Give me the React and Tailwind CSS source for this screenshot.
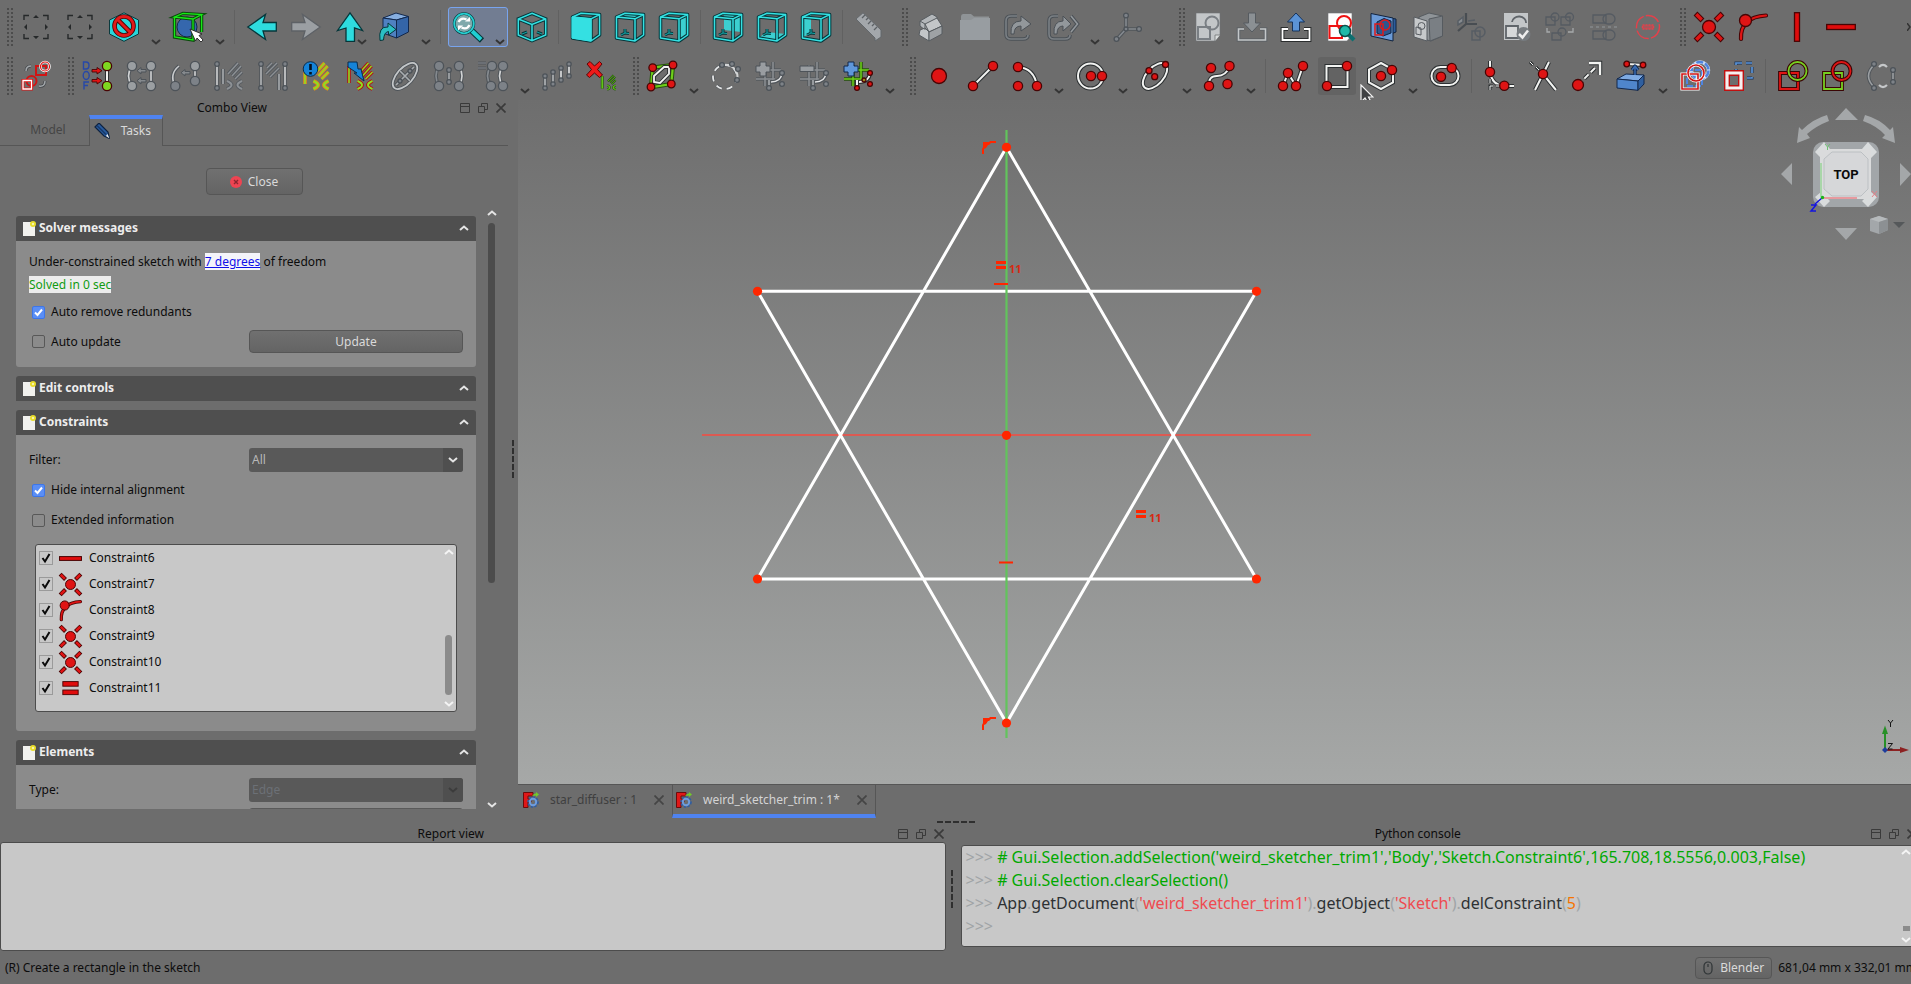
import React from "react";

/* ---------- drawing helpers ---------- */

const RED = "#df1414";
const CYAN = "#34e0e2";
const EDGE = "#06363a";

const Dot = ({ x, y, r = 4.6, g, c }) => (
  <circle cx={x} cy={y} r={r} fill={c || (g ? "#7d8288" : RED)} stroke={g ? "#4d5359" : "#480404"} strokeWidth="1.3" />
);

const Line = ({ d, c = "#f2f3f1", o = "#2c3032", w = 2, dash }) => (
  <g fill="none" strokeDasharray={dash}>
    <path d={d} stroke={o} strokeWidth={w + 2} />
    <path d={d} stroke={c} strokeWidth={w} />
  </g>
);

const GLine = ({ d, w = 1.6, c = "#a9adb0" }) => <Line d={d} c={c} o="#50555a" w={w} />;

const Page = ({ c = "#f4f4f4" }) => <path d="M3 1h24v22l-5 6H3z" fill={c} stroke="#6f7375" strokeWidth=".6" />;

const Bars = ({ c, o }) => (
  <g>
    <Line d="M14 13 24 2M18 15 27 5M21 18 28 11" c={c} o={o} w={1.4} />
    <Line d="M13 20q9 4 0 8M28 20q-9 4 0 8" c={c} o={o} w={2} />
  </g>
);

const Wire = ({ d }) => <Line d={d} c={CYAN} o={EDGE} w={1.5} />;

const Cube = ({ face, front }) => (
  <g strokeLinejoin="round">
    {!front && <path d={face} fill={CYAN} fillOpacity=".85" />}
    <Line d="M10 21V17M10 21l4 .5M10 21l-4 2" c="#16a9ab" o={EDGE} w={1} />
    <Wire d="M1.5 5 10 1.3 28.6 2.6 20 6.8zM20 6.8V29L1.5 26V5M28.6 2.6V23L20 29" />
    {front && <path d={face} fill={CYAN} stroke={CYAN} />}
  </g>
);

const Grid = ({ c, o }) => <Line d="M10 4V25M18 1V21M2 9H26M1 18H20" c={c} o={o} w={1.5} />;

const Sk = ({ a = RED, b = RED, o = "#3a0505", w = 1.8 }) => (
  <g>
    <Line d="M2 12H20V28H2z" c={a} o={o} w={w} />
    <Line d="M28.5 10a9 9 0 1 1-18 0a9 9 0 1 1 18 0z" c={b} o={o} w={w} />
  </g>
);

const ICONS = {
  box: (
    <g fill="none" stroke="#26292a" strokeWidth="1.4">
      <path d="M3 8V3.500H8M22 3.500H27V8M27 22V26.500H22M8 26.500H3V22" />
      <path d="M12 6h6l-3-3zM12 24h6l-3 3zM6 12v6l-3-3zM24 12v6l3-3z" fill="#26292a" stroke="none" />
    </g>
  ),
  nodraw: (
    <g>
      <path d="M15 .8 29.500 8V22L15 29.300.500 22V8z" fill="#29d6da" stroke="#0b3a3e" />
      <circle cx="15" cy="14" r="9.500" fill="none" stroke="#4a0404" strokeWidth="4.600" />
      <path d="M8.500 7.500 21.500 20.500" stroke="#4a0404" strokeWidth="4.600" />
      <circle cx="15" cy="14" r="9.500" fill="none" stroke="#e01a1a" strokeWidth="2.800" />
      <path d="M8.500 7.500 21.500 20.500" stroke="#e01a1a" strokeWidth="2.800" />
    </g>
  ),
  bbox: (
    <g>
      <circle cx="14" cy="15" r="10" fill="#3567ad" stroke="#12284d" />
      <Line d="M1.500 5 10 1.300 28.600 2.600 20 7zM20 7V28L1.500 25V5M28.600 2.600V20" c="#17e817" o="#0a4a0a" w={1.3} />
      <path d="M17 17 29 22 26 23.500 30 28 28 30 24 26 22.500 29z" fill="#fff" stroke="#222" strokeWidth=".9" />
    </g>
  ),
  left: <path d="M.8 15 18.500 2.500 16 10.500H29.300V19H16L18.500 27.500z" fill="#2edcdf" stroke={EDGE} strokeWidth="1.300" />,
  right: <path d="M29.200 15 11.500 2.500 14 10.500H.7V19H14L11.500 27.500z" fill="#9b9fa3" stroke="#5d6166" strokeWidth="1.300" />,
  up: <path d="M15 .8 27.500 18.500 19.500 16V29.300H11V16L2.500 18.500z" fill="#2edcdf" stroke={EDGE} strokeWidth="1.300" />,
  link: (
    <g strokeLinejoin="round" stroke="#12284d">
      <path d="M4 6 17 1 29.500 4.500 17.500 8z" fill="#86aee0" />
      <path d="M4 6 17.500 8V26L4 21z" fill="#4f81c2" />
      <path d="M17.500 8 29.500 4.500V20L17.500 26z" fill="#3465a8" />
      <path d="M1 28.500Q-1 14 9 15V11L17 17.500 9.500 23V19.500Q5 20 4.500 28z" fill="#2bbfc4" stroke={EDGE} />
    </g>
  ),
  zoom: (
    <g>
      <path d="M18 18 29 28.500" stroke={EDGE} strokeWidth="6" />
      <path d="M18 18 28 27.500" stroke="#20cfd2" strokeWidth="4" />
      <circle cx="11" cy="11.500" r="9.800" fill="#7fa9ac" stroke={EDGE} strokeWidth="2.800" />
      <circle cx="11" cy="11.500" r="9.800" fill="none" stroke="#26cdd0" strokeWidth="1.800" />
      <path d="M5.500 10Q8 5 13.500 7.500M16.500 13Q14 18 8.500 15.500" fill="none" stroke="#fff" strokeWidth="2.200" />
      <path d="M12 9.500h5V5zM10 13.500H5v5z" fill="#fff" />
    </g>
  ),
  iso: (
    <g>
      <Line d="M5 22 10 20M25 22 20 20" c="#16a9ab" o={EDGE} w={1} />
      <Wire d="M15 1.300 28.700 7V23L15 28.700 1.300 23V7zM1.300 7 15 12.500 28.700 7M15 12.500V28.700" />
    </g>
  ),
  front: <Cube front face="M1 5 20 6.800V29L1 26z" />,
  top: <Cube face="M1.500 5 10 1.300 28.600 2.600 20 6.800z" />,
  rightv: <Cube face="M20 6.800 28.600 2.600V23L20 29z" />,
  rear: <Cube face="M11 2H28V20L11 18z" />,
  bottom: <Cube face="M1.500 26 10 20 28.600 22 20 29z" />,
  leftv: <Cube face="M1.500 5 10 2V20L1.500 26z" />,
  ruler: (
    <g>
      <path d="M1 7 8 .8 26 18V25L20 29V26z" fill="#a3a7ab" stroke="#63686c" />
      <path d="M10 3 7 6M13 6 11 8M16 9 13 12M19 12 17 14M22 15 19 18" stroke="#5c6165" strokeWidth="1.300" />
    </g>
  ),
  part: (
    <g stroke="#575c60" strokeLinejoin="round" fill="#b3b7ba">
      <path d="M4 9 16 2 21 5V12L9 18 4 14z" />
      <path d="M9 12 21 6 26 14 13 20zM4 18 9 16 13 20V29L3 23z" fill="#c3c6c8" />
      <path d="M13 20 26 14V22L13 29z" fill="#9ea2a5" />
      <path d="M4 9 9 12V18" fill="none" />
    </g>
  ),
  folder: (
    <g>
      <path d="M1 4.500Q1 2 3 2H11L14 4.500H29V10H1z" fill="#8f9396" />
      <path d="M0 8H11L14 6H30V28H0z" fill="#989da1" />
    </g>
  ),
  share: (
    <g>
      <Line d="M13 4H7Q2 4 2 9V22Q2 27 7 27H19Q24 27 24 23" c="#7b8085" o="#4b5157" w={1.6} />
      <path d="M7 22Q6 9 17 9V4L27 12 17 19V14Q10 14 10 22z" fill="#92979b" stroke="#4b5157" />
    </g>
  ),
  share2: (
    <g>
      <Line d="M10 4H6Q1 4 1 9V22Q1 27 6 27H17Q22 27 22 23" c="#7b8085" o="#4b5157" w={1.6} />
      <path d="M6 22Q5 9 15 9V4L23 12 15 19V14Q9 14 9 22z" fill="#92979b" stroke="#4b5157" />
      <Line d="M23 4 29.500 12 23 20" c="#92979b" o="#4b5157" w={1.6} />
    </g>
  ),
  axes: (
    <g>
      <GLine d="M14 3V17H27M14 17 5 27" c="#858a8f" />
      <Dot g x={14} y={3.5} r={2.4} /><Dot g x={27} y={17} r={2.4} /><Dot g x={4.500} y={27} r={2.4} /><Dot g x={14} y={17} r={2} />
    </g>
  ),
  sketch: (
    <g>
      <Page c="#c3c6c8" />
      <path d="M22 29V23H27" fill="#dcdede" stroke="#6f7375" strokeWidth=".8" />
      <path d="M5 15H17V27H5z" fill="none" stroke="#7a7f84" strokeWidth="2" />
      <circle cx="19" cy="11" r="6.500" fill="none" stroke="#7a7f84" strokeWidth="2" />
    </g>
  ),
  imp: (
    <g>
      <Line d="M7 17H1.500V28H28.500V17H23" c="#c4c7c9" o="#5d6266" w={1.6} />
      <path d="M11.500 1H18.500V11H23.500L15 20 6.500 11H11.500z" fill="#8b9094" stroke="#565b60" />
    </g>
  ),
  exp: (
    <g>
      <Line d="M7 17H1.500V28H28.500V17H23" c="#fff" o="#2b2d2e" w={1.8} />
      <path d="M11.500 19V10H6.500L15 1 23.500 10H18.500V19z" fill="#5b93d6" stroke="#173259" />
    </g>
  ),
  viewsk: (
    <g>
      <Page c="#fdfdfd" />
      <path d="M4.500 14H17V26H4.500z" fill="none" stroke="#ee1111" strokeWidth="2" />
      <circle cx="19" cy="11" r="7" fill="none" stroke="#ee1111" strokeWidth="2" />
      <path d="M23 22 29 28" stroke="#0d6f70" strokeWidth="4" />
      <circle cx="20" cy="19" r="5.500" fill="#1fb9a8" stroke="#0b4e4b" strokeWidth="1.500" />
    </g>
  ),
  section: (
    <g>
      <path d="M14 5 27 7V20L17 24z" fill="#2d5c9c" stroke="#10233f" />
      <path d="M2 1.500 24 6V29L2 24z" fill="#6b9ad6" stroke="#10233f" />
      <path d="M8 10 15 6.500 22 9V21L14 24 8 21z" fill="#2c578f" stroke="#10233f" />
      <path d="M6 12H14V23H6z" fill="none" stroke="#e01a1a" strokeWidth="1.500" />
      <circle cx="16" cy="13" r="5" fill="none" stroke="#e01a1a" strokeWidth="1.500" />
    </g>
  ),
  mapsk: (
    <g stroke="#565b60">
      <path d="M6 5 16 1 29.500 4V24L18 29 6 26z" fill="#8f9498" />
      <path d="M16 7 29.500 4V24L17 29z" fill="#7a7f84" />
      <path d="M1 5 14 9V29L1 25z" fill="#c6c9cb" />
      <path d="M3 15 8 16V23L3 22z" fill="none" /><circle cx="8.500" cy="14" r="3.500" fill="none" />
    </g>
  ),
  reorient: (
    <g fill="none" stroke="#575d64" strokeWidth="1.500">
      <path d="M9 1V12L1 19M9 12H20" stroke="#484d52" strokeWidth="2.200" />
      <path d="M1 9 6 5V10L1 13zM11 9 18 8" fill="#868b90" />
      <path d="M15 19H23V28H15z" /><circle cx="23" cy="20" r="5" />
    </g>
  ),
  validate: (
    <g>
      <path d="M3 1H27V15L26 28H3z" fill="#c3c6c8" />
      <path d="M5 14H17V26H5z" fill="#d6d8d9" stroke="#60656a" strokeWidth="1.800" />
      <path d="M11 10a7 6 0 0 1 14 1" fill="none" stroke="#60656a" strokeWidth="1.800" />
      <circle cx="22.500" cy="22" r="7" fill="#777c80" />
      <path d="M18 22 21.500 25.500 27 18.500" fill="none" stroke="#eee" strokeWidth="2.500" />
    </g>
  ),
  merge: (
    <g fill="none" stroke="#555b62" strokeWidth="1.300">
      <path d="M1 5H10V13H1zM16 5H25V13H16zM7 21H16V28H7z" />
      <circle cx="10" cy="5" r="4" /><circle cx="24.500" cy="5" r="4" /><circle cx="17" cy="20" r="4" />
      <path d="M2 16V20H5M28 16V20H23" stroke="#a6a9ab" />
    </g>
  ),
  mirror: (
    <g fill="none" stroke="#555b62" strokeWidth="1.300">
      <path d="M4 3H17V11H4zM4 19H17V27H4z" />
      <rect x="14" y="2" width="12" height="10" rx="5" /><rect x="14" y="18" width="12" height="10" rx="5" />
      <path d="M1 15H30" strokeDasharray="3 3" stroke="#85898c" />
    </g>
  ),
  stop: (
    <g fill="none" stroke="#e4404a" strokeWidth="1.500">
      <circle cx="15" cy="15" r="11.500" strokeDasharray="15 2.200" />
      <rect x="9.500" y="13" width="11" height="4" fill="#e4404a" fillOpacity=".5" strokeDasharray="2 1" />
    </g>
  ),
  coincident: (
    <g>
      <path d="M1.500 1.500 8.500 8.500M28.500 1.500 21.500 8.500M1.500 28.500 8.500 21.500M28.500 28.500 21.500 21.500" stroke="#480404" strokeWidth="5.400" />
      <path d="M2.300 2.300 7.700 7.700M27.700 2.300 22.300 7.700M2.300 27.700 7.700 22.300M27.700 27.700 22.300 22.300" stroke={RED} strokeWidth="3.400" />
      <Dot x={15} y={15} r={6.5} />
    </g>
  ),
  tangent: (
    <g strokeLinecap="round">
      <Line d="M3 27Q2 5 28 3.500" c={RED} o="#480404" w={2.2} />
      <Dot x={7.500} y={8.500} r={6} />
    </g>
  ),
  vertical: <rect x="12.500" y=".7" width="5" height="28.600" fill="#e00c0c" stroke="#480404" strokeWidth="1.300" />,
  horizontal: <rect x=".7" y="12.500" width="28.600" height="5" fill="#e00c0c" stroke="#480404" strokeWidth="1.300" />,
  equal: (
    <g fill="#e00c0c" stroke="#480404" strokeWidth="1.200">
      <rect x="5" y="6" width="20" height="6" /><rect x="5" y="17" width="20" height="6" />
    </g>
  ),
  leave: (
    <g>
      <path d="M15 5H25V14H15z" fill="none" stroke="#d01414" strokeWidth="2" />
      <circle cx="24" cy="5.500" r="4.500" fill="none" stroke="#fff" strokeWidth="2.600" />
      <circle cx="24" cy="5.500" r="4.500" fill="none" stroke={RED} strokeWidth="1.200" />
      <circle cx="10.500" cy="20" r="5" fill="none" stroke="#d01414" strokeWidth="2" />
      <path d="M2 19.500H10.500V28H2z" fill="none" stroke={RED} strokeWidth="3" />
      <path d="M2 19.500H10.500V28H2z" fill="none" stroke="#fff" strokeWidth="1.300" />
      <path d="M5 10Q5 5 10 5M18 25Q24 26 24 20" fill="none" stroke="#44484c" strokeWidth="3" />
      <path d="M5 10Q5 5 10 5M18 25Q24 26 24 20" fill="none" stroke="#a3a7aa" strokeWidth="1.500" />
    </g>
  ),
  dof: (
    <g>
      <g fill="none" stroke="#2748a8" strokeWidth="1.400">
        <path d="M1.500 1H4Q7 1 7 4.500T4 8H1.500zM2 28.500V21H7M2 24.500H6" />
        <ellipse cx="4.200" cy="14.500" rx="3" ry="4" />
      </g>
      <Line d="M25 5V25" />
      <path d="M10 8.500H15V6.500L20 9.700 15 13V11H10zM10 18.500H15V16.500L20 19.700 15 23V21H10z" fill={RED} stroke="#480404" strokeWidth=".9" />
      <Dot x={25} y={5} c="#7fd620" /><Dot x={25} y={25} c="#7fd620" />
    </g>
  ),
  same2: (
    <g>
      <GLine d="M6 5Q-1 15 6 25" c="#d2d4d5" /><GLine d="M25 5V25" c="#d2d4d5" />
      <path d="M20 8.500H15V6.500L11 9.700 15 13V11H20zM20 18.500H15V16.500L11 19.700 15 23V21H20z" fill="#85898d" stroke="#4d5359" />
      <Dot g x={6} y={5} c="#9b9fa2" /><Dot g x={25} y={5} c="#9b9fa2" /><Dot g x={6} y={25} c="#9b9fa2" /><Dot g x={25} y={25} c="#9b9fa2" />
    </g>
  ),
  same1: (
    <g>
      <GLine d="M9 5Q-1 13 5 25" c="#c8cacc" /><GLine d="M25 5V20" c="#d2d4d5" />
      <path d="M20 10.500H15V8.500L11 11.700 15 15V13H20z" fill="#85898d" stroke="#4d5359" />
      <Dot g x={25} y={5} c="#9b9fa2" /><Dot g x={25} y={20} /><Dot g x={5.300} y={25} />
    </g>
  ),
  cons1: (
    <g>
      <GLine d="M3 3V27" c="#d2d4d5" /><GLine d="M9 8V23" /><Bars c="#8d9195" o="#565b60" />
      <Dot g x={3} y={3} r={2.3} /><Dot g x={3} y={27} r={2.3} />
    </g>
  ),
  cons2: (
    <g>
      <GLine d="M3 3V27" c="#b4b7b9" /><GLine d="M27 3V27" c="#d2d4d5" /><GLine d="M21 13V29" />
      <Line d="M8 13 19 2M12 16 21 7M9 7 14 2" c="#8d9195" o="#565b60" w={1.3} />
      <Dot g x={3} y={3} r={2.3} /><Dot g x={3} y={27} r={2.3} /><Dot g x={27} y={3} r={2.3} /><Dot g x={27} y={27} r={2.3} />
    </g>
  ),
  warn: (
    <g>
      <Line d="M3 8V23" c="#8ede22" o="#e08a1a" w={1.6} /><g transform="translate(-1.500 0)"><Bars c="#8ede22" o="#e08a1a" /></g>
      <circle cx="8.500" cy="8" r="7.300" fill="#1583d8" stroke="#0b2b4a" />
      <path d="M8.500 3V9M8.500 11V13.500" stroke="#04101c" strokeWidth="2.600" />
    </g>
  ),
  conflict: (
    <g>
      <Line d="M3 5V22" c="#8ede22" o="#b31212" w={1.6} /><g transform="translate(-1.500 0)"><Bars c="#8ede22" o="#b31212" /></g>
      <path d="M2 1H11L12 8H15L18 20 8 12H11L2 6z" fill="#1583d8" stroke="#0b2b4a" />
    </g>
  ),
  ellipsei: (
    <g>
      <g transform="rotate(-48 15 15)"><ellipse cx="15" cy="15" rx="16" ry="8" fill="none" stroke="#4d5359" strokeWidth="3.600" /><ellipse cx="15" cy="15" rx="16" ry="8" fill="none" stroke="#c3c6c8" strokeWidth="1.800" /></g>
      <GLine d="M6 24 24 6M10 10 20 20" />
      <Dot g x={10} y={20} r={2} /><Dot g x={20} y={10} r={2} />
    </g>
  ),
  symm: (
    <g>
      <GLine d="M5 5Q-1 15 5 25" c="#858a8f" /><GLine d="M25 5Q31 15 25 25" c="#d2d4d5" /><GLine d="M15 9V21" />
      <Dot g x={5} y={5} /><Dot g x={25} y={5} /><Dot g x={5} y={25} /><Dot g x={25} y={25} /><Dot g x={15} y={9} r={2.3} /><Dot g x={15} y={21} r={2.3} />
    </g>
  ),
  clone: (
    <g>
      <GLine d="M13 5Q6 15 13 25" c="#858a8f" /><GLine d="M25 5Q18 15 25 25" c="#d2d4d5" /><GLine d="M0 2H8M0 7H8" c="#858a8f" w={1.2} />
      <Dot g x={14} y={5} /><Dot g x={25} y={5} /><Dot g x={13} y={25} /><Dot g x={25} y={25} />
    </g>
  ),
  array: (
    <g>
      <GLine d="M3 15V27M11 11V23" c="#b4b7b9" /><GLine d="M19 7V19M27 3V15" c="#e2e3e4" />
      {[[3, 15], [3, 27], [11, 11], [11, 23], [19, 7], [19, 19], [27, 3], [27, 15]].map(([x, y]) => <Dot key={x + "-" + y} g x={x} y={y} r={2.2} />)}
    </g>
  ),
  del: (
    <g>
      <g transform="translate(14 13) scale(.56)"><Line d="M4 4V26" c="#62c41a" o="#1f4d08" w={3} /><Bars c="#62c41a" o="#1f4d08" /></g>
      <path d="M1 3 4 .5 8.500 5 13.500 .5 16 3 11.500 8.500 16.500 14 13.500 16.500 8.500 12 3.500 16.500 .5 14 5.500 8.500z" fill="#ee1a1a" stroke="#5c0606" />
    </g>
  ),
  bgeo: (
    <g>
      <Line d="M5.700 6.700 26 4 24.300 23 4 26.300z" c="#6fcf1c" o="#24520a" w={2.2} />
      <Line d="M7 21V15L17 6H22V13L13 22z" w={1.8} />
      <Dot x={5.700} y={6.700} r={3.8} /><Dot x={26} y={4} r={3.8} /><Dot x={4} y={26} r={3.8} /><Dot x={24.300} y={23} r={3.8} />
    </g>
  ),
  dcircle: (
    <g>
      <circle cx="14" cy="16" r="12" fill="none" stroke="#4d5359" strokeWidth="3" strokeDasharray="6 5" />
      <circle cx="14" cy="16" r="12" fill="none" stroke="#e6e7e7" strokeWidth="1.800" strokeDasharray="6 5" />
      <path d="M12 4a12 12 0 0 1 14 15" fill="none" stroke="#d2d4d5" strokeWidth="2" />
      <Dot g x={11} y={4} r={2.4} /><Dot g x={21} y={3} r={2.4} /><Dot g x={27} y={8} r={2.4} /><Dot g x={26} y={19} r={2.4} />
    </g>
  ),
  kplus: (
    <g>
      <Grid c="#8c9094" o="#54595e" /><GLine d="M16 21Q26 21 27 12" c="#e2e3e4" /><GLine d="M14 19V27" />
      <path d="M5 1H11V5H15V11H11V15H5V11H1V5H5z" fill="#999da1" stroke="#4d5359" />
      <Dot g x={14} y={27} r={2.4} /><Dot g x={27} y={12} r={2.4} /><Dot g x={27} y={23} r={2.4} />
    </g>
  ),
  kminus: (
    <g>
      <Grid c="#8c9094" o="#54595e" /><GLine d="M16 21Q26 21 27 12" c="#e2e3e4" /><GLine d="M14 19V27" />
      <path d="M1 5H15V10.500H1z" fill="#999da1" stroke="#4d5359" />
      <Dot g x={14} y={27} r={2.4} /><Dot g x={27} y={12} r={2.4} /><Dot g x={27} y={23} r={2.4} />
    </g>
  ),
  kins: (
    <g>
      <Grid c="#6fd01c" o="#24520a" /><Line d="M16 21Q26 21 27 12M14 19V27" />
      <path d="M5 1H11V5H15V11H11V15H5V11H1V5H5z" fill="#5f97da" stroke="#12284d" />
      <Dot x={14} y={27} r={2.4} /><Dot x={27} y={12} r={2.4} /><Dot x={27} y={23} r={2.4} /><Dot x={21} y={19} r={2} c="#a3861a" />
    </g>
  ),
  point: <Dot x={15} y={15} r={7.5} />,
  line: <g><Line d="M5 25 25 5" /><Dot x={5} y={25} /><Dot x={25} y={5} /></g>,
  arc: <g><Line d="M6 6Q22 7 25 25" /><Dot x={6} y={6} /><Dot x={6} y={25} /><Dot x={25} y={25} /></g>,
  circle: <g><Line d="M27 15a12.500 12.500 0 1 1-25 0a12.500 12.500 0 1 1 25 0z" /><Dot x={15} y={15} /><Dot x={26} y={15} /></g>,
  ellipse: (
    <g>
      <g transform="rotate(-48 15 15)"><ellipse cx="15" cy="15" rx="15.500" ry="8.500" fill="none" stroke="#2c3032" strokeWidth="4" /><ellipse cx="15" cy="15" rx="15.500" ry="8.500" fill="none" stroke="#f2f3f1" strokeWidth="2" /></g>
      <Dot x={25.500} y={3.500} r={3} /><Dot x={9} y={9.700} r={3} /><Dot x={14.700} y={15.700} r={3} />
    </g>
  ),
  bspline: <g><Line d="M5 25Q4 15 13 15T26 5" /><Dot x={7} y={7} /><Dot x={25.500} y={5} /><Dot x={5} y={25} /><Dot x={23.500} y={23} /></g>,
  poly: <g><Line d="M5 25 10 12 18 25 25 5" /><Dot x={5} y={25} /><Dot x={10} y={12} /><Dot x={18} y={25} /><Dot x={25} y={5} /></g>,
  rect: <g><Line d="M4.500 5H25.500V26H4.500z" /><Dot x={25} y={5} /><Dot x={5} y={25} /></g>,
  hex: <g><Line d="M15 2 27 8.500V21.500L15 28 3 21.500V8.500z" /><Dot x={15} y={15} /><Dot x={26} y={9} /></g>,
  slot: <g><Line d="M10.500 6H19.500a9 9 0 0 1 0 18H10.500a9 9 0 0 1 0-18z" /><Dot x={21.700} y={7} /><Dot x={11} y={15.700} /></g>,
  fillet: (
    <g>
      <Line d="M6 0V11Q8 24 20 25H30" /><Line d="M6 18V22M6 29V25H9M12 25H16" w={1} />
      <Dot x={6} y={11} /><Dot x={20.300} y={24.700} />
    </g>
  ),
  trim: (
    <g>
      <Line d="M21 1 7 29M15 13 28 29" /><Line d="M2 1 5 4M8 6 11 9" w={1} /><Dot x={15} y={13} />
    </g>
  ),
  extend: (
    <g>
      <Line d="M6 24 25 5" dash="6 3" /><Line d="M17 2H28V14" w={2.4} /><Dot x={6} y={24} r={5.5} />
    </g>
  ),
  external: (
    <g strokeLinejoin="round">
      <path d="M1 18 10 13 28 14 22 20z" fill="#7eaae2" stroke="#12284d" />
      <path d="M1 18 22 20V29.300L1 27z" fill="#4f85cb" stroke="#12284d" />
      <path d="M22 20 28 14V23L22 29.300z" fill="#2f5f9f" stroke="#12284d" />
      <Line d="M11 3 28 4" /><Line d="M19 14V6M16 9 19 5 22 9" c="#3a6db5" o="#12284d" w={1.4} />
      <Dot x={10.700} y={3} r={2.8} /><Dot x={27} y={4} r={2.8} />
    </g>
  ),
  carbon: (
    <g fill="none">
      <circle cx="20" cy="9.500" r="8.500" stroke="#c9daf2" strokeWidth="3.400" />
      <circle cx="20" cy="9.500" r="8.500" stroke="#4f84e0" strokeWidth="2.400" strokeDasharray="7 2" />
      <path d="M7 9H22V25H7z" stroke="#4f84e0" strokeWidth="2" strokeDasharray="6 2" />
      <path d="M2 13H18V28H2z" stroke="#fff" strokeWidth="3.200" /><path d="M2 13H18V28H2z" stroke="#d01414" strokeWidth="1.600" />
      <circle cx="16" cy="12" r="8" stroke="#fff" strokeWidth="3" /><circle cx="16" cy="12" r="8" stroke="#d01414" strokeWidth="1.600" />
    </g>
  ),
  constr: (
    <g fill="none">
      <path d="M12 2H28V17H12z" stroke="#173259" strokeWidth="3" strokeDasharray="6 4" />
      <path d="M12 2H28V17H12z" stroke="#5b93d6" strokeWidth="1.700" strokeDasharray="6 4" />
      <path d="M3 12H17V27H3z" stroke="#c01010" strokeWidth="6" fill="#6d6d6d" /><path d="M3 12H17V27H3z" stroke="#f5f0f0" strokeWidth="3.200" />
    </g>
  ),
  redgreen: <Sk b="#76d022" />,
  greenred: <Sk a="#76d022" />,
  garc: (
    <g>
      <GLine d="M9 3Q-4 15 9 27" c="#9b9fa2" /><GLine d="M27 9V20" c="#9b9fa2" />
      <path d="M13 6Q17 2 21 6M13 24Q17 28 21 24" stroke="#c6c8ca" strokeWidth="2.200" fill="none" />
      <Dot g x={8} y={3} r={2.4} /><Dot g x={8} y={27} r={2.4} /><Dot g x={27} y={9} r={2.4} /><Dot g x={27} y={21} r={2.4} />
    </g>
  ),
};

const Icon = ({ name, className = "size-[30px]" }) => (
  <svg viewBox="0 0 30 30" className={`${className} shrink-0 overflow-visible`} aria-hidden="true">{ICONS[name]}</svg>
);

const Chevron = ({ up, className = "h-[6px] w-[10px] text-[#e4e4e4]" }) => (
  <svg viewBox="0 0 10 6" className={`${className} shrink-0`} aria-hidden="true">
    <path d={up ? "M1 5 5 1.500 9 5" : "M1 1 5 4.500 9 1"} fill="none" stroke="currentColor" strokeWidth="2" />
  </svg>
);

/* ---------- toolbars ---------- */

const ROW1 = [
  "grip0", "box", "box", "nodraw+", "bbox+", "|", "left", "right", "up,", "link+", "|", "zoom*", "iso", "|",
  "front", "top", "rightv", "|", "rear", "bottom", "leftv", "|", "ruler", "grip",
  "part", "folder", "share", "share2+", "axes+", "grip",
  "sketch", "imp", "exp", "viewsk", "section", "mapsk", "reorient", "validate", "merge", "mirror", "stop", "grip",
  "coincident", "tangent", "vertical", "horizontal",
];
const ROW2 = [
  "grip0", "leave", "grip", "dof", "same2", "same1", "cons1", "cons2", "warn", "conflict", "ellipsei", "symm", "clone+", "array", "del", "grip",
  "bgeo+", "dcircle", "kplus", "kminus", "kins+", "grip",
  "point", "line", "arc+", "circle+", "ellipse+", "bspline+", "|", "poly", "rect#", "hex+", "slot", "|",
  "fillet", "trim", "extend", "external+", "carbon", "constr", "|", "redgreen", "greenred", "garc",
];

function Grip({ first }) {
  return (
    <div className={`flex h-full shrink-0 items-center justify-end pr-px ${first ? "w-[14px]" : "w-[17px]"}`}>
      <svg viewBox="0 0 6 38" className="h-[38px] w-[6px]" aria-hidden="true">
        <path d="M1 0V38M5 0V38" stroke="#4c4c4c" strokeWidth="2" strokeDasharray="2 2" />
      </svg>
    </div>
  );
}

function ToolButton({ item }) {
  const name = item.replace(/[+*#,]/, "");
  const mark = item.slice(name.length);
  const menu = mark === "+" || mark === "*";
  return (
    <button type="button" aria-label={name} className={`relative flex h-full shrink-0 items-center ${menu ? "w-16" : "w-11"}`}>
      {mark === "*" && <span className="absolute inset-x-[2px] inset-y-1 rounded-[3px] border border-[#78a4ee] bg-[#727d92]" />}
      {mark === "#" && <span className="absolute inset-x-[3px] inset-y-[5px] rounded-[3px] bg-[#636363]" />}
      <span className="relative flex w-11 justify-center"><Icon name={name} /></span>
      {(menu || mark === ",") && (
        <Chevron className="absolute right-[5px] bottom-[6px] h-[6px] w-[10px] text-[#353535]" />
      )}
      {name === "hex" && (
        <svg viewBox="0 0 14 20" className="absolute bottom-[-4px] left-[1px] h-[20px] w-[14px]" aria-hidden="true">
          <path d="M1 1V18L5 14 8 19 11 18 8.500 13H13z" fill="#3f4143" stroke="#f4f4f4" strokeWidth="1.200" />
        </svg>
      )}
    </button>
  );
}

function ToolRow({ items, more }) {
  return (
    <div className="flex h-12 items-center">
      {items.map((it, i) =>
        it.startsWith("grip") ? <Grip key={i} first={it === "grip0"} />
          : it === "|" ? <div key={i} className="mx-[4px] h-[34px] w-[2px] shrink-0 border-l border-[#616161]" />
            : <ToolButton key={i} item={it} />
      )}
      {more && (
        <svg viewBox="0 0 4 8" className="ml-auto h-[8px] w-[4px]" aria-hidden="true"><path d="M0 0 3 4 0 8" fill="none" stroke="#333" strokeWidth="1.500" /></svg>
      )}
    </div>
  );
}

/* ---------- dock parts ---------- */

function DockTitle({ children }) {
  return (
    <div className="flex h-4 shrink-0 items-center pr-[2px] pl-1">
      <h2 className="flex-1 text-center leading-4">{children}</h2>
      <div className="flex gap-2 text-[#3a3a3a]">
        <button type="button" aria-label="Minimize"><svg viewBox="0 0 10 10" className="size-[10px]"><path d="M.5.5H9.500V9.500H.5zM.5 3.500H9.500" fill="none" stroke="currentColor" /></svg></button>
        <button type="button" aria-label="Float"><svg viewBox="0 0 10 10" className="size-[10px]"><path d="M3.500 3.500V.5H9.500V6.500H6.500M.5 3.500H6.500V9.500H.5z" fill="none" stroke="currentColor" /></svg></button>
        <button type="button" aria-label="Close"><svg viewBox="0 0 10 10" className="size-[10px]"><path d="M.5.5 9.500 9.500M9.500.5.5 9.500" fill="none" stroke="currentColor" strokeWidth="1.700" /></svg></button>
      </div>
    </div>
  );
}

function Section({ title, children, className = "" }) {
  return (
    <section>
      <h3 className="flex h-[25px] items-center gap-[3px] rounded-t-[3px] bg-[#4f4f4f] px-[7px] pb-px font-bold text-[#ededed]">
        <svg viewBox="0 0 13 15" className="h-[15px] w-[13px]" aria-hidden="true">
          <path d="M0 1H12V15H0z" fill="#f1f1ee" />
          <circle cx="10" cy="3" r="3" fill="#e8dc28" /><circle cx="10" cy="3" r="1.200" fill="#f8f4b0" />
        </svg>
        <span className="flex-1">{title}</span>
        <button type="button" aria-label={`Collapse ${title}`}><Chevron up /></button>
      </h3>
      {children && <div className={`rounded-b-[3px] bg-[#8b8b8b] ${className}`}>{children}</div>}
    </section>
  );
}

function Check({ label, on }) {
  return (
    <label className="flex h-[18px] items-center gap-[6px] pl-[3px]">
      <span className="grid">
        <input type="checkbox" defaultChecked={on} className="peer col-start-1 row-start-1 size-[13px] appearance-none rounded-[2px] border border-[#585858] checked:border-[#3d76e8] checked:bg-[#5a8ef5]" />
        <svg viewBox="0 0 13 13" className="pointer-events-none invisible col-start-1 row-start-1 size-[13px] peer-checked:visible"><path d="M3 6.500 5.500 9 10 3.500" fill="none" stroke="#fff" strokeWidth="2" /></svg>
      </span>
      {label}
    </label>
  );
}

function Select({ id, value, disabled }) {
  return (
    <div className="relative h-6 w-[214px]">
      <select id={id} disabled={disabled} className={`h-full w-full appearance-none rounded-[3px] bg-[#595959] pl-[3px] ${disabled ? "text-[#6c7076] opacity-100" : "text-[#b8b8b8]"}`}>
        <option>{value}</option>
      </select>
      <span className="pointer-events-none absolute inset-y-0 right-0 flex w-5 items-center justify-center rounded-r-[3px] bg-[#4f4f4f]">
        <Chevron className={`h-[6px] w-[10px] ${disabled ? "text-[#3c3c3c]" : "text-[#e4e4e4]"}`} />
      </span>
    </div>
  );
}

const CONSTRAINTS = [
  ["Constraint6", "horizontal"], ["Constraint7", "coincident"], ["Constraint8", "tangent"],
  ["Constraint9", "coincident"], ["Constraint10", "coincident"], ["Constraint11", "equal"],
];

const BTN = "border border-[#565656] bg-linear-to-b from-[#707070] to-[#646464] text-[#dadada] rounded-[4px]";

function ComboView() {
  return (
    <aside className="flex w-[508px] shrink-0 flex-col">
      <DockTitle>Combo View</DockTitle>
      <div className="-mt-px flex h-[31px] shrink-0">
        <button type="button" className="w-[89px] border-b border-[#565656] pl-[7px] text-center text-[#454545]">Model</button>
        <button type="button" className="flex w-[74px] items-center justify-between border-x border-t-4 border-x-[#565656] border-t-[#4f83f0] pr-[11px] pb-[3px] pl-1 text-[#dadada]">
          <svg viewBox="0 0 16 16" className="size-4" aria-hidden="true">
            <path d="M1 4 5 0 14 9 15.500 15.500 10 13z" fill="#2a5c9e" stroke="#0f2340" strokeWidth="1.200" />
            <path d="M3 2.500 12 11.500" stroke="#173a6b" strokeWidth="1.500" /><path d="M12 13 13.500 11 15.500 15.500z" fill="#eee" />
          </svg>
          Tasks
        </button>
        <div className="flex-1 border-b border-[#565656]" />
      </div>
      <div className="flex shrink-0 justify-center pt-[22px]">
        <button type="button" className={`${BTN} flex h-[27px] w-[97px] items-center justify-center gap-[6px]`}>
          <svg viewBox="0 0 12 12" className="size-3" aria-hidden="true"><circle cx="6" cy="6" r="6" fill="#ee4452" /><path d="M4 4 8 8M8 4 4 8" stroke="#8c2630" strokeWidth="1.400" /></svg>
          Close
        </button>
      </div>
      <div className="mt-[14px] mb-[9px] flex min-h-0 flex-1">
        <div className="w-[476px] overflow-hidden pt-[7px] pl-4">
          <div className="flex flex-col gap-[9px]">
            <Section title="Solver messages" className="h-[126px] px-[13px] pt-3">
              <p className="leading-[18px]">Under-constrained sketch with <a href="#dof" className="inline-block bg-[#f4f4fa] leading-[17px] text-[#1010e8] underline">7 degrees</a> of freedom</p>
              <p className="mt-[5px] leading-[18px]"><span className="inline-block bg-[#ececec] leading-[17px] text-[#119b11]">Solved in 0 sec</span></p>
              <div className="mt-[9px]"><Check label="Auto remove redundants" on /></div>
              <div className="mt-[9px] flex items-center justify-between">
                <Check label="Auto update" />
                <button type="button" className={`${BTN} h-[23px] w-[214px]`}>Update</button>
              </div>
            </Section>
            <Section title="Edit controls" />
            <Section title="Constraints" className="h-[296px] px-[13px] pt-[13px]">
              <div className="flex items-center justify-between">
                <label htmlFor="filter">Filter:</label>
                <Select id="filter" value="All" />
              </div>
              <div className="mt-[9px]"><Check label="Hide internal alignment" on /></div>
              <div className="mt-3"><Check label="Extended information" /></div>
              <div className="mx-[6px] mt-[15px] flex h-[168px] justify-between rounded-[3px] border border-[#4c4c4c] bg-[#c8c8c8]">
                <ul>
                  {CONSTRAINTS.map(([label, icon]) => (
                    <li key={label}>
                      <label className="flex h-[26px] items-center pl-[3px]">
                        <span className="grid">
                          <input type="checkbox" defaultChecked className="peer col-start-1 row-start-1 size-[14px] appearance-none border border-[#9a9a9a]" />
                          <svg viewBox="0 0 14 14" className="invisible col-start-1 row-start-1 size-[14px] peer-checked:visible"><path d="M3.500 7 6 10.500 10.500 3" fill="none" stroke="#0a0a0a" strokeWidth="2" /></svg>
                        </span>
                        <Icon name={icon} className="mr-[7px] ml-[6px] size-[23px]" />
                        {label}
                      </label>
                    </li>
                  ))}
                </ul>
                <div className="flex w-[15px] flex-col items-center py-[4px] text-white">
                  <Chevron up className="h-[6px] w-[10px] text-[#f4f4f4]" />
                  <div className="mt-auto mb-[6px] h-[60px] w-[7px] rounded-full bg-[#8b8b8b]" />
                  <Chevron className="h-[6px] w-[10px] text-[#f4f4f4]" />
                </div>
              </div>
            </Section>
            <Section title="Elements" className="h-[100px] px-[13px] pt-[13px]">
              <div className="flex items-center justify-between">
                <label htmlFor="etype">Type:</label>
                <Select id="etype" value="Edge" disabled />
              </div>
              <div className="mt-[6px] ml-auto h-6 w-[214px] rounded-[3px] border border-[#595959]" />
            </Section>
          </div>
        </div>
        <div className="flex w-[31px] flex-col items-center py-px">
          <Chevron up />
          <div className="mt-[7px] h-[360px] w-[7px] rounded-full bg-[#4c4c4c]" />
          <Chevron className="mt-auto h-[6px] w-[10px] text-[#e4e4e4]" />
        </div>
      </div>
    </aside>
  );
}

/* ---------- 3D view ---------- */

const Tan = ({ x, y }) => <path transform={`translate(${x} ${y})`} d="M0 13V8L1 6V1H7L8 0H14V2H9L7 4H6L4 7L2 8V13z" fill="#ff2600" />;

function Sketch() {
  const dots = [[1006.5, 147.3], [757.5, 291.3], [1256.5, 291.3], [1006.5, 435.3], [757.5, 579], [1256.5, 579], [1006.5, 723]];
  return (
    <svg viewBox="518 100 1393 684" className="h-full w-full" role="img" aria-label="Sketch geometry">
      <path d="M702 435H1311" stroke="#dc5a52" strokeWidth="2" />
      <path d="M1006.500 147.300 757.500 579H1256.500zM757.500 291.200H1256.500L1006.500 723z" fill="none" stroke="#fff" strokeWidth="3" />
      <path d="M1006.500 130V738" stroke="#62c45c" strokeWidth="2.200" />
      {dots.map(([x, y]) => <circle key={x + "," + y} cx={x} cy={y} r="4.600" fill="#ff2600" />)}
      <Tan x={982} y={141} /><Tan x={982} y={717} />
      <path d="M996 262.500H1006M996 267.500H1006M1136 511.500H1146M1136 516.500H1146" stroke="#ff2600" strokeWidth="3" />
      <path d="M994 284H1008M999 562.500H1013" stroke="#ff2600" strokeWidth="2" />
      <g fill="#d62a12" fontFamily="Noto Sans, sans-serif" fontSize="11" fontWeight="700">
        <text x="1009" y="273">11</text><text x="1149" y="522">11</text>
      </g>
    </svg>
  );
}

function NaviCube() {
  return (
    <svg viewBox="1776 100 135 150" className="absolute top-0 right-0 h-[150px] w-[135px]" role="img" aria-label="Navigation cube">
      <g fill="#a4a7a9">
        <path d="M1846 108 1858 120H1835zM1846 240 1835 228H1857zM1781 174 1792 163V185zM1911 174 1900 163V186z" />
        <path d="M1827 115 1829 121Q1816 126 1807 134L1810 138 1797 143 1799 127 1802 130Q1813 119 1827 115zM1865 115 1863 121Q1877 126 1885 135L1882 138 1895 143 1893 127 1890 130Q1880 119 1865 115z" />
      </g>
      <rect x="1813" y="142" width="66" height="65" rx="10" fill="#a2a6a9" />
      <path d="M1815 152 1824 142 1830 149 1821 158zM1877 152 1868 142 1862 149 1871 158zM1815 197 1824 207 1830 201 1821 192zM1877 197 1868 207 1862 201 1871 192z" fill="#d9dcdd" />
      <rect x="1820" y="149" width="51" height="50" rx="3" fill="#dadbdc" />
      <path d="M1832 152H1861L1868 159V189L1861 196H1832L1824 189V159z" fill="#d6d7d9" stroke="#bcc0c3" />
      <path d="M1821 163V197" stroke="#a9d6a9" strokeWidth="2" />
      <path d="M1823 198H1857" stroke="#e79a9f" strokeWidth="2" />
      <text x="1846" y="179" textAnchor="middle" fontFamily="Liberation Sans Narrow, Roboto, sans-serif" fontSize="13" fontWeight="700" fill="#0a0a0a">TOP</text>
      <path d="M1825 144 1827.500 147 1830 144M1827.500 147V150" fill="none" stroke="#6fc274" />
      <path d="M1872 191 1877 197M1877 191 1872 197" stroke="#e58088" />
      <path d="M1822 198 1815 204M1811 205H1816L1811 211H1816" fill="none" stroke="#1414e0" strokeWidth="1.500" />
      <circle cx="1822.500" cy="197.500" r="1.700" fill="#19b419" />
      <path d="M1870 219 1879 216 1888 219V230L1879 234 1870 231z" fill="#a3a7aa" />
      <path d="M1870 219 1879 216 1888 219 1879 222z" fill="#b6babc" /><path d="M1879 222 1888 219V230L1879 234z" fill="#8c9093" />
      <path d="M1893 222H1905L1899 228z" fill="#55585a" />
    </svg>
  );
}

function AxisCross() {
  return (
    <svg viewBox="1876 716 35 40" className="absolute right-0 bottom-[28px] h-[40px] w-[35px]" role="img" aria-label="Axis cross">
      <path d="M1885 750V732" stroke="#279027" strokeWidth="2" /><path d="M1885 725.500 1888 734H1882z" fill="#279027" />
      <path d="M1885 750H1902" stroke="#8c2222" strokeWidth="2" /><path d="M1909 750 1900 747V753z" fill="#8c2222" />
      <path d="M1885 747 1888 750 1885 753 1882 750z" fill="#1d3d9c" />
      <path d="M1888 720 1890.500 723 1893 720M1890.500 723V727M1888 743.500H1892.500L1888 749H1892.500" fill="none" stroke="#151515" />
    </svg>
  );
}

function DocTab({ label, active }) {
  return (
    <div className={`flex items-center pr-2 ${active ? "border-x border-b-4 border-x-[#565656] border-b-[#4f83f0] pl-[3px] text-[#d4d4d4]" : "mb-1 pl-[5px] text-[#3f3f3f]"}`}>
      <svg viewBox="0 0 16 16" className="mr-[11px] size-4" aria-hidden="true">
        <path d="M.5.5H10V4H5V7H8V10H5V15.500H.5z" fill="#e01818" stroke="#6d0b0b" />
        <circle cx="10" cy="10" r="4" fill="none" stroke="#2f5da0" strokeWidth="3.600" strokeDasharray="2 1" /><circle cx="10" cy="10" r="3.200" fill="none" stroke="#6f9cdc" strokeWidth="2" />
        <path d="M9 4Q11 1 13 1.500V0L16 2.500 13 5V3.500z" fill="#73c92c" />
      </svg>
      <button type="button">{label}</button>
      <button type="button" aria-label="Close tab" className="ml-[17px] text-[#454545]">
        <svg viewBox="0 0 10 10" className="size-[10px]"><path d="M.5.5 9.500 9.500M9.500.5.5 9.500" stroke="currentColor" strokeWidth="1.700" /></svg>
      </button>
    </div>
  );
}

/* ---------- console ---------- */

const G = ({ children }) => <span className="text-[#a0a4a6]">{children}</span>;
const S = ({ children }) => <span className="text-[#ef4b50]">{children}</span>;

export default function App() {
  return (
    <div className="flex h-screen flex-col overflow-hidden bg-[#6d6d6d] font-['Noto_Sans',sans-serif] text-[12px] leading-[18px] text-[#0c0c0c]">
      <header className="flex shrink-0 flex-col gap-px pt-[3px]">
        <ToolRow items={ROW1} more />
        <ToolRow items={ROW2} />
      </header>

      <main className="flex min-h-0 flex-1">
        <ComboView />
        <div className="flex w-[10px] shrink-0 items-center justify-center">
          <svg viewBox="0 0 2 38" className="h-[38px] w-[2px]" aria-hidden="true"><path d="M1 0V38" stroke="#2f2f2f" strokeWidth="2" strokeDasharray="6 2" /></svg>
        </div>
        <div className="flex min-w-0 flex-1 flex-col">
          <div className="relative min-h-0 flex-1 bg-linear-to-b from-[#6e6e6e] to-[#a6a8a7]">
            <Sketch />
            <NaviCube />
            <AxisCross />
          </div>
          <div className="flex h-[34px] shrink-0 border-t border-[#565656]">
            <DocTab label="star_diffuser : 1" />
            <DocTab label="weird_sketcher_trim : 1*" active />
          </div>
        </div>
      </main>

      <div className="flex h-2 shrink-0 items-center justify-center">
        <svg viewBox="0 0 38 2" className="h-[2px] w-[38px]" aria-hidden="true"><path d="M0 1H38" stroke="#2f2f2f" strokeWidth="2" strokeDasharray="6 2" /></svg>
      </div>

      <div className="-mr-2 flex h-[125px] shrink-0">
        <section className="flex min-w-0 flex-[945] flex-col">
          <DockTitle>Report view</DockTitle>
          <div className="flex-1 rounded-[3px] border border-[#4c4c4c] bg-[#c8c8c8]" />
        </section>
        <div className="flex w-[15px] shrink-0 items-center justify-center pr-[3px]">
          <svg viewBox="0 0 2 38" className="h-[38px] w-[2px]" aria-hidden="true"><path d="M1 0V38" stroke="#2f2f2f" strokeWidth="2" strokeDasharray="6 2" /></svg>
        </div>
        <section className="flex min-w-0 flex-[958] flex-col pb-1">
          <DockTitle>Python console</DockTitle>
          <div className="mt-[3px] flex flex-1 justify-between overflow-hidden rounded-[3px] border border-[#4c4c4c] bg-[#c8c8c8]">
            <div className="pl-[4px] text-[16px] leading-[23px] whitespace-pre text-[#2e3234]">
              <p><G>{">>> "}</G><span className="text-[#00a800]"># Gui.Selection.addSelection('weird_sketcher_trim1','Body','Sketch.Constraint6',165.708,18.5556,0.003,False)</span></p>
              <p><G>{">>> "}</G><span className="text-[#00a800]"># Gui.Selection.clearSelection()</span></p>
              <p><G>{">>> "}</G>App<G>.</G>getDocument<G>(</G><S>'weird_sketcher_trim1'</S><G>).</G>getObject<G>(</G><S>'Sketch'</S><G>).</G>delConstraint<G>(</G><span className="text-[#f67400]">5</span><G>)</G></p>
              <p><G>{">>> "}</G></p>
            </div>
            <div className="flex w-[24px] flex-col items-center py-[3px]">
              <Chevron up className="h-[6px] w-[10px] text-[#f4f4f4]" />
              <div className="mt-auto mb-[6px] h-[5px] w-[7px] bg-[#8b8b8b]" />
              <Chevron className="h-[6px] w-[10px] text-[#f4f4f4]" />
            </div>
          </div>
        </section>
      </div>

      <footer className="flex h-[33px] shrink-0 items-center justify-between overflow-hidden pl-[5px]">
        <span>(R) Create a rectangle in the sketch</span>
        <div className="-mr-[6px] flex items-center gap-[6px] whitespace-nowrap">
          <button type="button" className={`${BTN} flex h-[22px] w-[77px] items-center justify-center gap-[7px]`}>
            <svg viewBox="0 0 10 14" className="h-[14px] w-[10px]" aria-hidden="true"><rect x="1" y="1" width="8" height="12" rx="4" fill="none" stroke="#2f3436" strokeWidth="1.200" /><path d="M5 3V6" stroke="#2f3436" strokeWidth="1.200" /></svg>
            Blender
          </button>
          <span>681,04 mm x 332,01 mm</span>
        </div>
      </footer>
    </div>
  );
}
